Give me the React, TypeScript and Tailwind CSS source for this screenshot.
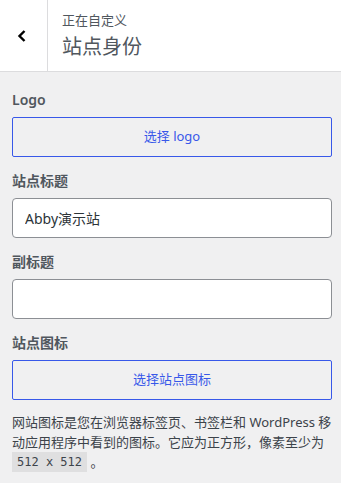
const Header = () => {
    return (
        <div className="flex h-[72px] bg-white border-b border-[#dcdcde]">
            <button className="w-12 h-full flex items-center justify-center border-r border-[#dcdcde] shrink-0">
                <svg width="12" height="14" viewBox="0 0 12 14" className="mr-[3px]">
                    <polyline points="8.5,2 3.5,7 8.5,12" fill="none" stroke="#000" strokeWidth="2.4" />
                </svg>
            </button>
            <div className="flex flex-col pl-[14px] pt-[11px]">
                <span className="text-[13px] leading-[18px] text-[#50575e]">正在自定义</span>
                <h3 className="text-[20px] leading-[28px] text-[#50575e] mt-[4px]">站点身份</h3>
            </div>
        </div>
    );
};

const Label = ({ children }: { children: React.ReactNode }) => (
    <div className="h-5 leading-5 text-[14px] font-semibold text-[#50575e] mb-[7px]">{children}</div>
);

export default function App() {
    return (
        <div
            className="w-[341px] h-[483px] bg-[#f0f0f1] overflow-hidden"
            style={{ fontFamily: '"Noto Sans", "Noto Sans CJK SC", sans-serif' }}
        >
            <Header />
            <div className="pl-3 pr-[9px] pt-[18px] flex flex-col">
                <Label>Logo</Label>
                <button className="h-10 w-full border border-[#3858e9] rounded-[2px] text-[13px] text-[#3858e9]">
                    选择 logo
                </button>

                <div className="mt-[14px]">
                    <Label>站点标题</Label>
                    <input
                        defaultValue="Abby演示站"
                        className="h-10 w-full bg-white border border-[#8c8f94] rounded-[4px] px-3 text-[14px] text-[#2c3338] outline-none"
                    />
                </div>

                <div className="mt-[14px]">
                    <Label>副标题</Label>
                    <input className="h-10 w-full bg-white border border-[#8c8f94] rounded-[4px] px-3 text-[14px] text-[#2c3338] outline-none" />
                </div>

                <div className="mt-[14px]">
                    <Label>站点图标</Label>
                    <button className="h-10 w-full border border-[#3858e9] rounded-[2px] text-[13px] text-[#3858e9]">
                        选择站点图标
                    </button>
                </div>

                <p className="mt-3 text-[13px] leading-5 text-[#3c434a]">
                    网站图标是您在浏览器标签页、书签栏和 WordPress 移动应用程序中看到的图标。它应为正方形，像素至少为{' '}
                    <code className="inline-block align-top h-5 px-[5px] bg-black/[0.07] text-[12px] leading-5 text-[#3c434a] font-['DejaVu_Sans_Mono',monospace]">
                        512 x 512
                    </code>{' '}
                    。
                </p>
            </div>
        </div>
    );
}
